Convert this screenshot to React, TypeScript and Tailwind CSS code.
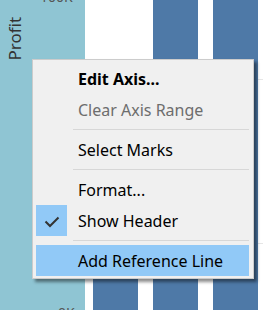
import React from "react";

function Row({
  children,
  checked = false,
  highlight = false,
  bold = false,
  disabled = false,
}: {
  children: React.ReactNode;
  checked?: boolean;
  highlight?: boolean;
  bold?: boolean;
  disabled?: boolean;
}) {
  return (
    <div className={`flex h-[31px] items-center ${highlight ? "bg-[#91c9f7]" : ""}`}>
      <div className={`flex h-[31px] w-[31px] items-center justify-center ${checked ? "bg-[#91c9f7]" : ""}`}>
        {checked && (
          <svg width="31" height="31" viewBox="0 0 31 31">
            <path d="M9.5 16.5 L14 21 L22.5 12.5" fill="none" stroke="#333" strokeWidth="2" />
          </svg>
        )}
      </div>
      <span
        className={`ml-[11px] whitespace-nowrap text-[16px] leading-none ${bold ? "font-bold" : ""} ${
          disabled ? "text-[#6d6d6d]" : "text-black"
        }`}
      >
        {children}
      </span>
    </div>
  );
}

function Sep() {
  return (
    <div className="h-[9px] pl-[37px] pt-[4px]">
      <div className="h-px bg-[#d7d7d7]" />
    </div>
  );
}

export default function App() {
  return (
    <div
      className="relative h-[310px] w-[263px] overflow-hidden bg-white"
      style={{ fontFamily: '"Noto Sans", "Open Sans", sans-serif' }}
    >
      <div className="flex h-full">
        <div className="relative h-full w-[85px] bg-[#8fc5d3]">
          <span className="absolute left-[40px] top-[-14px] text-[14px] text-[#555]">100K</span>
          <span className="absolute left-[58px] top-[302px] text-[14px] text-[#555]">0K</span>
          <span className="absolute left-[-7px] top-[26px] -rotate-90 text-[17px] text-[#333]">Profit</span>
        </div>
        <div className="relative flex h-full flex-1 items-end gap-[15px] pl-[8px]">
          <div className="absolute left-[173px] right-0 top-[79px] h-px bg-[#e6e6e6]" />
          <div className="absolute left-[173px] right-0 top-[243px] h-px bg-[#e6e6e6]" />
          <div className="h-[160px] w-[45px] bg-[#4e79a7]" />
          <div className="h-full w-[45px] bg-[#4e79a7]" />
          <div className="h-full w-[45px] bg-[#4e79a7]" />
        </div>
      </div>

      <div className="absolute left-[32px] top-[59px] w-[222px] border border-[#cccccc] bg-[#f0f0f0] pb-[2px] pl-[3px] pr-[4px] pt-[3px] shadow-[3px_3px_3px_rgba(0,0,0,0.45)]">
        <Row bold>Edit Axis...</Row>
        <Row disabled>Clear Axis Range</Row>
        <Sep />
        <Row>Select Marks</Row>
        <Sep />
        <Row>Format...</Row>
        <Row checked>Show Header</Row>
        <Sep />
        <Row highlight>Add Reference Line</Row>
      </div>
    </div>
  );
}
